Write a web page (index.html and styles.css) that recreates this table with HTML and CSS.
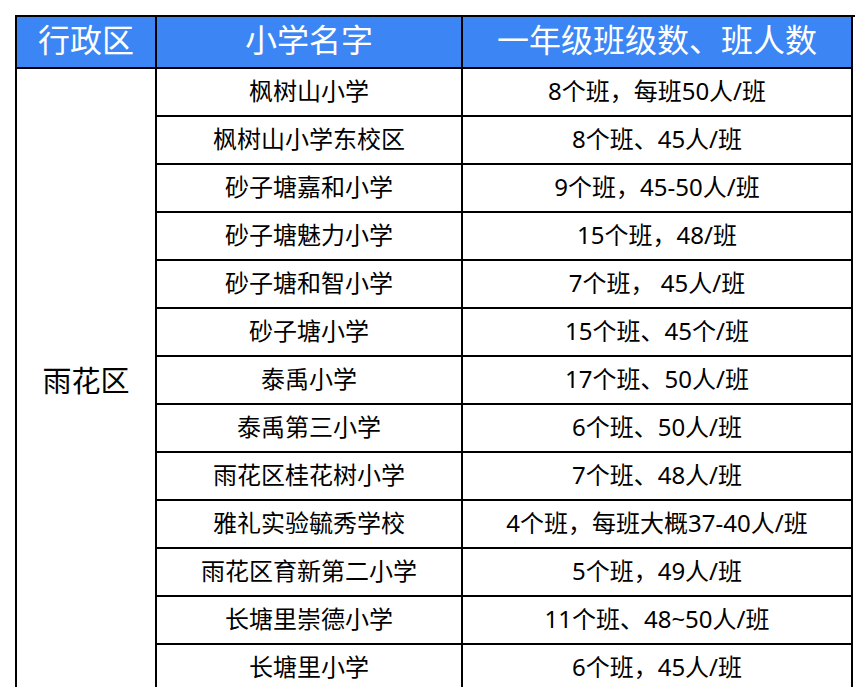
FILE: index.html
```html
<!DOCTYPE html>
<html lang="zh-CN">
<head>
<meta charset="utf-8">
<title>雨花区小学一年级班级数</title>
<link rel="stylesheet" href="styles.css">
</head>
<body>
<div class="sheet">
  <div class="cell head">行政区</div>
  <div class="cell head">小学名字</div>
  <div class="cell head">一年级班级数、班人数</div>

  <div class="cell district">雨花区</div>

  <div class="cell">枫树山小学</div>
  <div class="cell">8个班，每班50人/班</div>
  <div class="cell">枫树山小学东校区</div>
  <div class="cell">8个班、45人/班</div>
  <div class="cell">砂子塘嘉和小学</div>
  <div class="cell">9个班，45-50人/班</div>
  <div class="cell">砂子塘魅力小学</div>
  <div class="cell">15个班，48/班</div>
  <div class="cell">砂子塘和智小学</div>
  <div class="cell">7个班， 45人/班</div>
  <div class="cell">砂子塘小学</div>
  <div class="cell">15个班、45个/班</div>
  <div class="cell">泰禹小学</div>
  <div class="cell">17个班、50人/班</div>
  <div class="cell">泰禹第三小学</div>
  <div class="cell">6个班、50人/班</div>
  <div class="cell">雨花区桂花树小学</div>
  <div class="cell">7个班、48人/班</div>
  <div class="cell">雅礼实验毓秀学校</div>
  <div class="cell">4个班，每班大概37-40人/班</div>
  <div class="cell">雨花区育新第二小学</div>
  <div class="cell">5个班，49人/班</div>
  <div class="cell">长塘里崇德小学</div>
  <div class="cell">11个班、48~50人/班</div>
  <div class="cell">长塘里小学</div>
  <div class="cell">6个班，45人/班</div>
</div>
</body>
</html>
```

FILE: styles.css
```css
html, body {
  margin: 0;
  padding: 0;
  background: #ffffff;
  overflow: hidden;
}

body {
  font-family: "Noto Sans", "Noto Sans CJK SC", sans-serif;
  color: #000000;
}

.sheet {
  display: grid;
  grid-template-columns: 140px 306px 390px;
  grid-template-rows: 52px repeat(13, 48px);
  width: 838px;
  margin: 15px 0 0 15px;
  border-top: 2px solid #000;
  border-left: 2px solid #000;
  box-sizing: content-box;
}

.cell {
  box-sizing: border-box;
  border-right: 2px solid #000;
  border-bottom: 2px solid #000;
  display: flex;
  align-items: center;
  justify-content: center;
  font-size: 24px;
  line-height: 1;
  white-space: pre;
  padding-bottom: 3px;
}

.head {
  background: #3b86f4;
  color: #ffffff;
  font-size: 32px;
  padding-bottom: 4px;
}

.district {
  grid-column: 1;
  grid-row: 2 / span 13;
  font-size: 29px;
  padding-bottom: 0;
}
```
